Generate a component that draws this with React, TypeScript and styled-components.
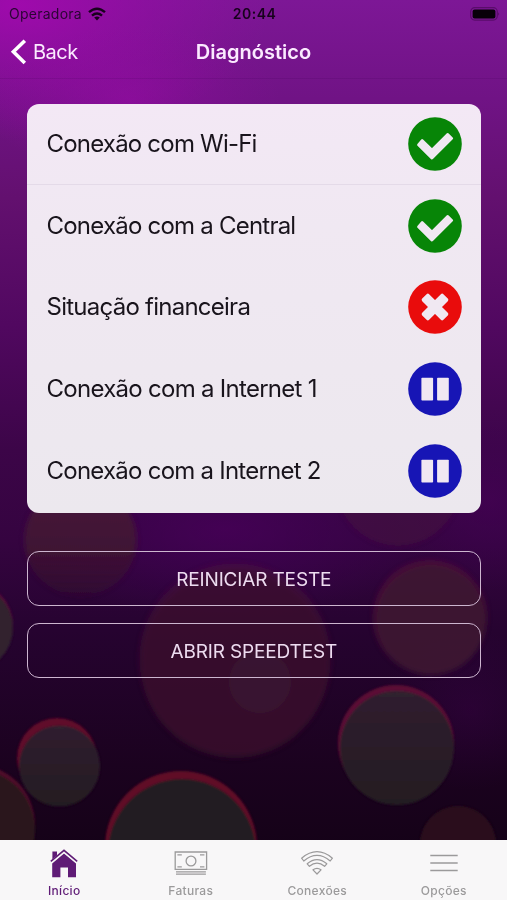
import React from 'react';
import styled, { createGlobalStyle } from 'styled-components';

const GlobalStyle = createGlobalStyle`
  * { box-sizing: border-box; }
  body { margin: 0; font-family: Inter, "Liberation Sans", sans-serif; }
`;

const Screen = styled.div`
  position: relative;
  width: 507px;
  height: 900px;
  display: flex;
  flex-direction: column;
  overflow: hidden;
`;

const Backdrop = styled.svg`
  position: absolute;
  inset: 0;
  z-index: -1;
`;

const StatusBar = styled.header`
  display: grid;
  grid-template-columns: 1fr auto 1fr;
  align-items: center;
  height: 27px;
  padding: 0 7px 0 9px;
  font-size: 14px;
  color: #2b0534;
`;

const Carrier = styled.div`
  display: flex;
  align-items: center;
  gap: 6px;
  letter-spacing: 0.25px;
`;

const Clock = styled.div`
  font-weight: 600;
  letter-spacing: 0.5px;
  color: #17021c;
`;

const Battery = styled.svg`
  justify-self: end;
`;

const NavBar = styled.nav`
  display: grid;
  grid-template-columns: 1fr auto 1fr;
  align-items: center;
  height: 52px;
  padding: 0 10px 2px;
  border-bottom: 1px solid rgba(50, 0, 70, 0.12);
  color: #fbeaff;
`;

const BackButton = styled.button`
  display: flex;
  align-items: center;
  gap: 6px;
  padding: 0;
  border: 0;
  background: none;
  color: inherit;
  font: 400 20px Inter, sans-serif;
  letter-spacing: -0.5px;
`;

const Title = styled.h1`
  margin: 0;
  font-size: 20px;
  font-weight: 600;
  letter-spacing: 0.02px;
`;

const Content = styled.main`
  flex: 1;
  padding: 24.5px 26px 0 26.5px;
`;

const Card = styled.ul`
  margin: 0;
  padding: 0;
  list-style: none;
  height: 409.5px;
  border-radius: 12px;
  overflow: hidden;
  background: linear-gradient(180deg, #f3e8f5 0%, #f0e8f2 30%, #ece8ee 100%);
`;

const TestRow = styled.li<{ $divided?: boolean }>`
  display: flex;
  align-items: center;
  justify-content: space-between;
  height: 81.8px;
  padding: 0 19.5px 0 20px;
  border-bottom: 1px solid ${(p) => (p.$divided ? '#e4dae8' : 'transparent')};
`;

const TestName = styled.span<{ $spacing: number }>`
  font-size: 24px;
  line-height: 30px;
  letter-spacing: ${(p) => p.$spacing}px;
  color: #19141c;
`;

const Actions = styled.div`
  display: flex;
  flex-direction: column;
  gap: 17px;
  margin-top: 38px;
`;

const OutlineButton = styled.button`
  height: 55px;
  padding: 2px 0 0;
  border: 1.5px solid #cdb6d0;
  border-radius: 12px;
  background: transparent;
  color: #eddcf0;
  font: 400 19px Inter, sans-serif;
  letter-spacing: -0.15px;
`;

const TabBar = styled.footer`
  display: grid;
  grid-template-columns: repeat(4, 1fr);
  height: 60px;
  padding-left: 1px;
  background: #f8f7f8;
`;

const Tab = styled.button<{ $active?: boolean }>`
  display: flex;
  flex-direction: column;
  align-items: center;
  padding: 8px 0 0;
  border: 0;
  background: none;
  color: ${(p) => (p.$active ? '#5f1b76' : '#9b9a9b')};
`;

const TabLabel = styled.span`
  margin-top: 5px;
  font: 500 12px/16px Inter, sans-serif;
  letter-spacing: 0.3px;
`;

type Status = 'ok' | 'fail' | 'paused';

const statusColor: Record<Status, string> = { ok: '#078507', fail: '#e90c0c', paused: '#1715b5' };

function StatusIcon({ status }: { status: Status }) {
  return (
    <svg width="54" height="54" viewBox="-27 -27 54 54" fill="#f0e8f2">
      <circle r="26.8" fill={statusColor[status]} />
      {status === 'ok' && (
        <path
          d="M-16.6 .8 -12.8 -3.6 -3 5.9 12.8 -9.7 16.8 -5.7 -3 14.2Z"
          stroke="#f0e8f2"
          strokeWidth="2.6"
          strokeLinejoin="round"
        />
      )}
      {status === 'fail' && (
        <g>
          <rect x="-15" y="-4.9" width="30" height="9.8" rx="1.8" transform="rotate(45)" />
          <rect x="-15" y="-4.9" width="30" height="9.8" rx="1.8" transform="rotate(-45)" />
        </g>
      )}
      {status === 'paused' && (
        <g>
          <rect x="-13.6" y="-11.3" width="11.7" height="22.8" rx="0.8" />
          <rect x="2.1" y="-11.3" width="11.7" height="22.8" rx="0.8" />
        </g>
      )}
    </svg>
  );
}

function HomeIcon() {
  return (
    <svg width="28" height="30" viewBox="0 0 28 30" fill="currentColor">
      <path d="M14 5.4 26 15.4V29.2H18V19.6H10.4V29.2H2.2V15.4Z" />
      <path d="M2.4 11.5V3.4H7V8Z" />
      <path d="M1 14 14 3.4 27 14" fill="none" stroke="#f8f7f8" strokeWidth="2.4" />
      <path d="M.8 13.4 14 2.4 27.2 13.4" fill="none" stroke="currentColor" strokeWidth="1.6" />
    </svg>
  );
}

function MoneyIcon() {
  return (
    <svg width="34" height="30" viewBox="0 0 34 30" fill="none" stroke="currentColor" strokeWidth="1.3">
      <path d="M1.2 4H32.6V21.4H1.2ZM2 23.9H31.9M2 26.2H31.9" />
      <circle cx="17" cy="13" r="4.9" />
      <path d="M3.4 6.8H7.8M26 6.8H30.4M3.4 18.8H7.8M26 18.8H30.4" />
    </svg>
  );
}

function SignalIcon() {
  return (
    <svg width="34" height="30" viewBox="0 0 34 30" fill="none" stroke="currentColor" strokeWidth="1.2" strokeLinejoin="round">
      <path d="M1.6 10.2Q17 -2.8 32.4 10.2L30.2 13Q17 1.9 3.8 13Z" />
      <path d="M7.2 15.8Q17 7.4 26.8 15.8L24.6 18.3Q17 11.9 9.4 18.3Z" />
      <path d="M13 21.8Q17 18.8 21 21.8L17 26Z" />
    </svg>
  );
}

function MenuIcon() {
  return (
    <svg width="28" height="30" viewBox="0 0 28 30" stroke="currentColor" strokeWidth="1.5">
      <path d="M.3 7.6H27.7M.3 15H27.7M.3 22.4H27.7" />
    </svg>
  );
}

function BokehBackdrop() {
  return (
    <Backdrop width="507" height="900" viewBox="0 0 507 900">
      <defs>
        <linearGradient id="base" x1="0" y1="0" x2="0" y2="1">
          <stop offset="0" stopColor="#7d1796" />
          <stop offset=".11" stopColor="#701385" />
          <stop offset=".22" stopColor="#63106f" />
          <stop offset=".36" stopColor="#510860" />
          <stop offset=".5" stopColor="#3c0548" />
          <stop offset=".6" stopColor="#350440" />
          <stop offset=".7" stopColor="#260330" />
          <stop offset=".85" stopColor="#1b021f" />
          <stop offset="1" stopColor="#110213" />
        </linearGradient>
        <radialGradient id="glow">
          <stop offset="0" stopColor="#a508b0" stopOpacity=".85" />
          <stop offset="1" stopColor="#9708a5" stopOpacity="0" />
        </radialGradient>
        <radialGradient id="violet">
          <stop offset="0" stopColor="#48005a" stopOpacity=".75" />
          <stop offset="1" stopColor="#40005a" stopOpacity="0" />
        </radialGradient>
        <linearGradient id="disc" x1="0" y1="0" x2="0" y2="1">
          <stop offset="0" stopColor="#30202f" />
          <stop offset="1" stopColor="#241b22" />
        </linearGradient>
        <linearGradient id="fade" x1="0" y1="0" x2="0" y2="1">
          <stop offset="0" stopColor="#4a143a" />
          <stop offset=".6" stopColor="#401432" />
          <stop offset="1" stopColor="#35102c" stopOpacity=".4" />
        </linearGradient>
        <filter id="soft" x="-10%" y="-10%" width="120%" height="120%">
          <feGaussianBlur stdDeviation="2.5" />
        </filter>
        <filter id="edge" x="-10%" y="-10%" width="120%" height="120%">
          <feGaussianBlur stdDeviation=".8" />
        </filter>
      </defs>
      <rect width="507" height="900" fill="url(#base)" />
      <ellipse cx="20" cy="5" rx="250" ry="135" fill="url(#glow)" />
      <ellipse cx="130" cy="100" rx="150" ry="75" fill="url(#glow)" opacity=".5" />
      <ellipse cx="225" cy="530" rx="210" ry="90" fill="url(#violet)" />
      <ellipse cx="490" cy="500" rx="100" ry="90" fill="url(#violet)" opacity=".7" />
      <ellipse cx="470" cy="710" rx="90" ry="80" fill="url(#violet)" opacity=".35" />
      <g filter="url(#soft)">
        <circle cx="80.5" cy="540" r="56" fill="url(#fade)" opacity=".9" />
        <circle cx="398" cy="484" r="62" fill="#45103b" opacity=".5" />
        <circle cx="235" cy="659" r="96" fill="#501238" opacity=".4" />
        <circle cx="235" cy="664" r="94" fill="#38142c" opacity=".6" />
        <circle cx="260" cy="682" r="31" fill="#402036" opacity=".35" />
        <circle cx="430" cy="617" r="57" fill="#5d1238" opacity=".5" />
        <circle cx="431" cy="620" r="55" fill="#3b1830" opacity=".75" />
      </g>
      <g filter="url(#edge)">
        <circle cx="-30" cy="625" r="43" fill="#58103a" />
        <circle cx="-30" cy="628" r="43" fill="#30202f" />
        <circle cx="-26" cy="825" r="61" fill="#4f0b2a" />
        <circle cx="-26" cy="830" r="61" fill="#2b151e" />
        <circle cx="396" cy="743" r="58" fill="#5c1034" />
        <circle cx="397" cy="748" r="57" fill="url(#disc)" />
        <circle cx="57" cy="758" r="40" fill="#600829" />
        <circle cx="59.5" cy="766" r="40.5" fill="url(#disc)" />
        <circle cx="181" cy="847" r="76" fill="#600a28" />
        <circle cx="182" cy="853" r="74" fill="#241b20" />
        <circle cx="458" cy="844" r="38" fill="#2b111d" />
      </g>
    </Backdrop>
  );
}

const tests: { name: string; status: Status; spacing: number }[] = [
  { name: 'Conexão com Wi-Fi', status: 'ok', spacing: -0.8 },
  { name: 'Conexão com a Central', status: 'ok', spacing: -0.78 },
  { name: 'Situação financeira', status: 'fail', spacing: -0.75 },
  { name: 'Conexão com a Internet 1', status: 'paused', spacing: -0.72 },
  { name: 'Conexão com a Internet 2', status: 'paused', spacing: -0.76 },
];

const tabs = [
  { label: 'Início', Icon: HomeIcon },
  { label: 'Faturas', Icon: MoneyIcon },
  { label: 'Conexões', Icon: SignalIcon },
  { label: 'Opções', Icon: MenuIcon },
];

export default function App() {
  return (
    <Screen>
      <GlobalStyle />
      <BokehBackdrop />
      <StatusBar>
        <Carrier>
          Operadora
          <svg width="18" height="14" viewBox="0 0 18 14" fill="none" stroke="#17021c" strokeWidth="2.4">
            <path d="M1 5.2Q9 -1.8 17 5.2M4 8.6Q9 4.3 14 8.6" />
            <path d="M6.2 10.5Q9 8.3 11.8 10.5L9 13.5Z" fill="#17021c" stroke="none" />
          </svg>
        </Carrier>
        <Clock>20:44</Clock>
        <Battery width="30" height="14" viewBox="0 0 30 14">
          <rect x=".7" y=".7" width="26.6" height="12.4" rx="4" fill="none" stroke="#5a0d6b" strokeWidth="1.2" />
          <rect x="2.6" y="2.4" width="22.8" height="9" rx="2" fill="#080009" />
          <path d="M28.4 5.2Q30 7 28.4 8.8Z" fill="#4d0a5c" />
        </Battery>
      </StatusBar>
      <NavBar>
        <BackButton>
          <svg width="17" height="26" viewBox="0 0 17 26" fill="none" stroke="#fff" strokeWidth="3.6">
            <path d="M14.8 1.7 3.4 12.8 14.8 24" />
          </svg>
          Back
        </BackButton>
        <Title>Diagnóstico</Title>
      </NavBar>
      <Content>
        <Card>
          {tests.map((t, i) => (
            <TestRow key={t.name} $divided={i === 0}>
              <TestName $spacing={t.spacing}>{t.name}</TestName>
              <StatusIcon status={t.status} />
            </TestRow>
          ))}
        </Card>
        <Actions>
          <OutlineButton>REINICIAR TESTE</OutlineButton>
          <OutlineButton>ABRIR SPEEDTEST</OutlineButton>
        </Actions>
      </Content>
      <TabBar>
        {tabs.map(({ label, Icon }, i) => (
          <Tab key={label} $active={i === 0}>
            <Icon />
            <TabLabel>{label}</TabLabel>
          </Tab>
        ))}
      </TabBar>
    </Screen>
  );
}
